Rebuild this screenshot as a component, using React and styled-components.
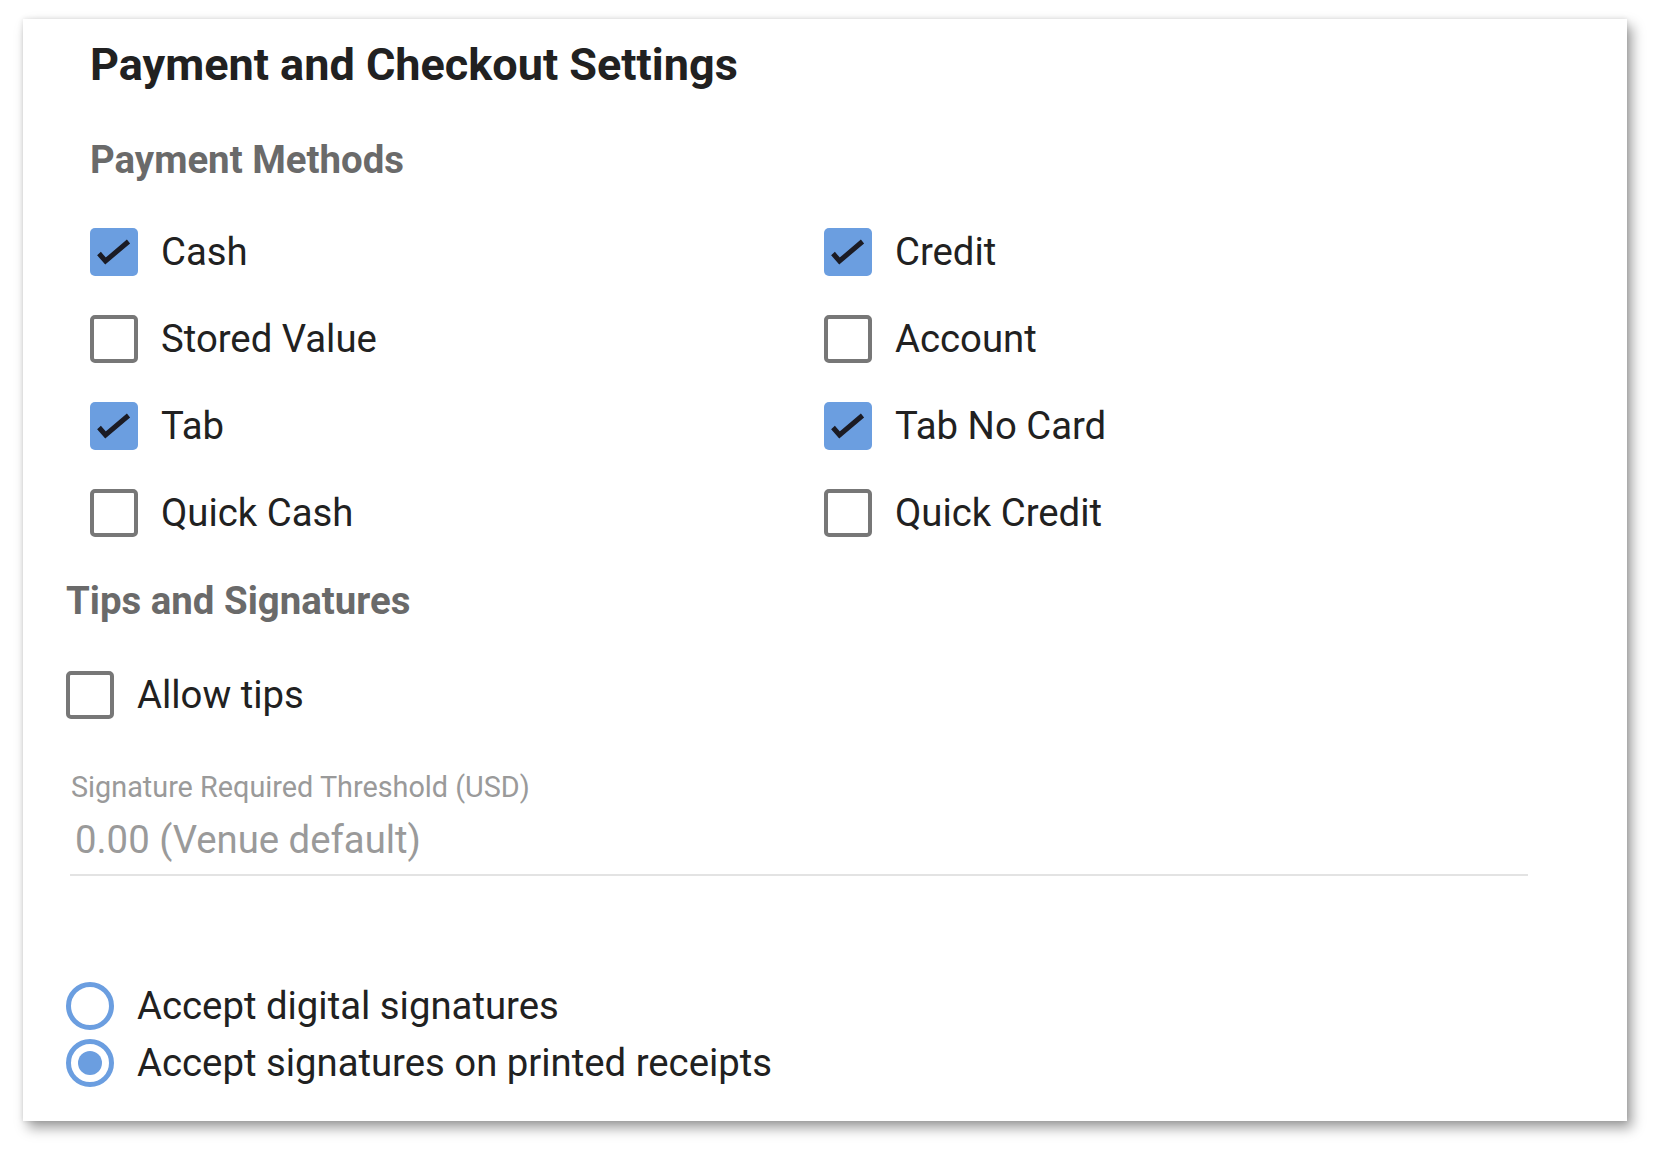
import React from "react";
import styled, { createGlobalStyle } from "styled-components";

const GlobalStyle = createGlobalStyle`
  html, body {
    margin: 0;
    padding: 0;
    background: #ffffff;
  }
  body {
    font-family: Roboto, "Noto Sans", "Liberation Sans", sans-serif;
    color: #212121;
  }
`;

const Page = styled.div`
  box-sizing: border-box;
  min-height: 1156px;
  padding: 19px 0 30px 23px;
`;

const Card = styled.section`
  box-sizing: border-box;
  width: 1604px;
  height: 1102px;
  background: #ffffff;
  padding: 19px 99px 0 43px;
  box-shadow: 5px 7px 12px rgba(0, 0, 0, 0.38), 0 0 5px rgba(0, 0, 0, 0.12);
  display: flex;
  flex-direction: column;
`;

const Indented = styled.div`
  padding-left: 24px;
  display: flex;
  flex-direction: column;
`;

const Title = styled.h1`
  margin: 0;
  font-size: 45px;
  line-height: 54px;
  font-weight: 700;
  color: #212121;
`;

const SectionHeading = styled.h2`
  margin: ${(p) => p.$top}px 0 0 0;
  font-size: 38.4px;
  line-height: 46px;
  font-weight: 700;
  color: #6a6a6a;
`;

const CheckGrid = styled.div`
  margin-top: 45px;
  display: grid;
  grid-template-columns: 734px 734px;
  grid-auto-rows: 48px;
  row-gap: 39px;
`;

const OptionRow = styled.label`
  display: flex;
  align-items: center;
  gap: 23px;
  height: 48px;
  font-size: 38.3px;
  line-height: 46px;
  color: #212121;
  margin-top: ${(p) => p.$top || 0}px;
`;

const Box = styled.span`
  box-sizing: border-box;
  flex: none;
  width: 48px;
  height: 48px;
  border-radius: 5px;
  border: ${(p) => (p.$checked ? "none" : "4px solid #777777")};
  background: ${(p) => (p.$checked ? "#6b9ee0" : "#ffffff")};
  display: flex;
  align-items: center;
  justify-content: center;
`;

const CheckMark = styled.svg`
  width: 48px;
  height: 48px;
  display: block;
`;

const Field = styled.div`
  margin: 51px 0 0 4px;
  width: 1458px;
  display: flex;
  flex-direction: column;
`;

const FieldLabel = styled.div`
  font-size: 28.8px;
  line-height: 34px;
  color: #9a9a9a;
  padding-left: 1px;
`;

const FieldValue = styled.div`
  margin-top: 13px;
  font-size: 38.3px;
  line-height: 46px;
  color: #9a9a9a;
  padding-left: 5px;
`;

const Underline = styled.div`
  margin-top: 11px;
  height: 2px;
  background: #e3e3e3;
`;

const RadioGroup = styled.div`
  margin-top: 106px;
  display: flex;
  flex-direction: column;
  gap: 9px;
`;

const RadioCircle = styled.span`
  box-sizing: border-box;
  flex: none;
  width: 48px;
  height: 48px;
  border-radius: 50%;
  border: 5px solid #6b9ee0;
  display: flex;
  align-items: center;
  justify-content: center;
  &::after {
    content: "";
    width: 24px;
    height: 24px;
    border-radius: 50%;
    background: #6b9ee0;
    display: ${(p) => (p.$checked ? "block" : "none")};
  }
`;

const Checkbox = ({ checked }) => (
  <Box $checked={checked}>
    {checked && (
      <CheckMark viewBox="0 0 48 48">
        <polyline
          points="9,25.5 15.5,33 38.5,13.5"
          fill="none"
          stroke="#1b1b24"
          strokeWidth="5"
          strokeLinejoin="miter"
        />
      </CheckMark>
    )}
  </Box>
);

const methods = [
  ["Cash", true],
  ["Credit", true],
  ["Stored Value", false],
  ["Account", false],
  ["Tab", true],
  ["Tab No Card", true],
  ["Quick Cash", false],
  ["Quick Credit", false],
];

export default function App() {
  return (
    <>
      <GlobalStyle />
      <Page>
        <Card>
          <Indented>
            <Title>Payment and Checkout Settings</Title>
            <SectionHeading $top={45}>Payment Methods</SectionHeading>
            <CheckGrid>
              {methods.map(([name, checked]) => (
                <OptionRow key={name}>
                  <Checkbox checked={checked} />
                  {name}
                </OptionRow>
              ))}
            </CheckGrid>
          </Indented>
          <SectionHeading $top={41}>Tips and Signatures</SectionHeading>
          <OptionRow $top={47}>
            <Checkbox checked={false} />
            Allow tips
          </OptionRow>
          <Field>
            <FieldLabel>Signature Required Threshold (USD)</FieldLabel>
            <FieldValue>0.00 (Venue default)</FieldValue>
            <Underline />
          </Field>
          <RadioGroup>
            <OptionRow>
              <RadioCircle />
              Accept digital signatures
            </OptionRow>
            <OptionRow>
              <RadioCircle $checked />
              Accept signatures on printed receipts
            </OptionRow>
          </RadioGroup>
        </Card>
      </Page>
    </>
  );
}
